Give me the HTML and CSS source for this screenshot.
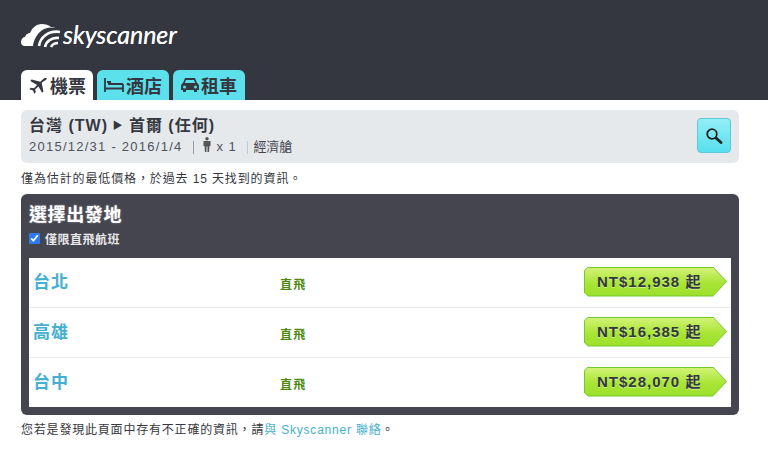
FILE: index.html
```html
<!DOCTYPE html>
<html lang="zh-Hant">
<head>
<meta charset="utf-8">
<title>Skyscanner</title>
<link rel="stylesheet" href="styles.css">
</head>
<body>
<header class="top">
  <div class="logo">
    <svg class="cloud" width="41" height="26" viewBox="0 0 41 26">
      <path fill="#fff" d="M0 20c0-3 2-5 4-5 1-3 3-4 5-4 2-5 6-9 12-9 3 0 7 1 9 3 1 0 3 0 4 1-8-2-15 2-19 9-2 3-3 7-3 9H4c-3 0-4-2-4-4z"/>
      <path fill="none" stroke="#fff" stroke-width="2.600" d="M18 24c1-8 9-16 21-14"/>
      <path fill="none" stroke="#fff" stroke-width="2.600" d="M24 25c1-5 6-10 14-9"/>
      <path fill="none" stroke="#fff" stroke-width="2.600" d="M30 25c1-2 3-4 7-4"/>
    </svg>
    <span class="brand">skyscanner</span>
  </div>
  <nav class="tabs">
    <a class="tab tab-on">
      <svg width="20" height="17" viewBox="0 0 22 18"><path fill="#353740" d="M20.500 1c-1-.8-2.800-.2-4 1L13.500 5 4 2.500 2.500 4l7.500 4.500L6.500 12 3 11.500 1.500 13l4 1.500 1.500 3.500 1.500-1.500-.5-3.500L11.500 10l4 7 1.500-1.500L15 6l4.500-3c1-1 1.500-1.500 1-2z"/></svg>
      <span>機票</span>
    </a>
    <a class="tab">
      <svg width="20" height="14" viewBox="0 0 20 14"><path fill="none" stroke="#353740" stroke-width="1.800" d="M1 0v14M1 10.500h18M19 6v8M4 6h15"/><path fill="#353740" d="M3 3h4v2H3z"/></svg>
      <span>酒店</span>
    </a>
    <a class="tab">
      <svg width="18" height="16" viewBox="0 0 18 16"><path fill="#353740" d="M4 1h10l2 5c1 .5 2 1.500 2 3v4h-2v2h-3v-2H5v2H2v-2H0V9c0-1.500 1-2.500 2-3zM5 3 3.800 6h10.400L13 3z"/><circle cx="3.500" cy="10" r="1.500" fill="#5ce0ec"/><circle cx="14.500" cy="10" r="1.500" fill="#5ce0ec"/></svg>
      <span>租車</span>
    </a>
  </nav>
</header>
<main class="content">
  <section class="summary">
    <div class="summary-text">
      <div class="route">台灣 (TW) <span class="arrow">▶</span> 首爾 (任何)</div>
      <div class="meta">
        <span class="dates">2015/12/31 - 2016/1/4</span>
        <span class="sep"></span>
        <svg class="person" width="10" height="15" viewBox="0 0 9 15"><circle cx="4.500" cy="1.800" r="1.700" fill="#555"/><path fill="#555" d="M1 4h7v5H7l-.5 6H5V9.500H4V15H2.500L2 9H1z"/></svg>
        <span class="count">x 1</span>
        <span class="sep sep-light"></span>
        <span class="cabin">經濟艙</span>
      </div>
    </div>
    <button class="search" aria-label="搜尋">
      <svg width="18" height="18" viewBox="0 0 18 18"><circle cx="7" cy="7" r="4.800" fill="none" stroke="#222" stroke-width="1.800"/><path stroke="#222" stroke-width="2.800" stroke-linecap="round" d="M11 11l5 4.500"/></svg>
    </button>
  </section>
  <p class="note">僅為估計的最低價格，於過去 15 天找到的資訊。</p>
  <section class="panel">
    <h2>選擇出發地</h2>
    <label class="direct"><input type="checkbox" checked>僅限直飛航班</label>
    <div class="rows">
      <div class="row"><a class="city">台北</a><span class="stop">直飛</span><a class="price"><span>NT$12,938 起</span></a></div>
      <div class="row"><a class="city">高雄</a><span class="stop">直飛</span><a class="price"><span>NT$16,385 起</span></a></div>
      <div class="row"><a class="city">台中</a><span class="stop">直飛</span><a class="price"><span>NT$28,070 起</span></a></div>
    </div>
  </section>
  <p class="foot">您若是發現此頁面中存有不正確的資訊，請<a>與 Skyscanner 聯絡</a>。</p>
</main>
</body>
</html>
```
FILE: styles.css
```css
* { box-sizing: border-box; }
html, body { margin: 0; padding: 0; }
body {
  background: #fff;
  color: #353740;
  font-family: "Liberation Sans", "Noto Sans CJK TC", sans-serif;
  font-size: 12px;
  height: 465px;
  overflow: hidden;
}
.top {
  background: #353740;
  height: 100px;
  padding: 21px 21px 0;
  display: flex;
  flex-direction: column;
}
.logo { display: flex; align-items: center; gap: 1px; height: 27px; }
.brand {
  color: #fff;
  font-family: "Lato", sans-serif;
  font-style: italic;
  font-weight: 400;
  font-size: 25px;
  line-height: 27px;
  letter-spacing: -0.1px;
  text-shadow: 0 0 .6px #fff;
}
.tabs { display: flex; gap: 4px; margin-top: 22px; }
.tab {
  height: 30px;
  width: 72px;
  background: #5ce0ec;
  border-radius: 6px 6px 0 0;
  display: flex;
  align-items: center;
  justify-content: center;
  gap: 2px;
  font-size: 18px;
  font-weight: 700;
  color: #353740;
}
.tab-on { background: #fff; }
.content { padding: 10px 29px 0 21px; }
.summary {
  height: 53px;
  width: 718px;
  background: #e6e9ec;
  border-radius: 6px;
  padding: 6px 8px 0 8px;
  display: flex;
  justify-content: space-between;
}
.route { font-size: 16px; font-weight: 700; line-height: 20px; color: #353740; letter-spacing: 1px; }
.arrow { font-size: 10px; margin-left: -1px; position: relative; top: -2px; }
.meta {
  display: flex;
  align-items: center;
  gap: 5px;
  font-size: 13px;
  line-height: 18px;
  color: #50525c;
}
.dates { letter-spacing: 1.25px; }
.count { letter-spacing: .9px; margin-left: -1px; }
.cabin { color: #44454f; margin-left: -2px; letter-spacing: -.2px; }
.sep { width: 1px; height: 13px; background: #9a9ca4; margin-left: 6px; margin-right: 3px; }
.sep-light { background: #c5c7cc; margin-left: 5px; margin-right: 3px; }
.person { margin-top: -5px; }
.search {
  width: 34px;
  height: 35px;
  margin-top: 2px;
  padding: 0;
  border: 1px solid #5cc8d8;
  border-radius: 4px;
  background: linear-gradient(#93eef6, #58e0ee);
  display: flex;
  align-items: center;
  justify-content: center;
}
.note { margin: 7px 0 8px; padding-top: 1px; height: 16px; font-size: 12px; line-height: 16px; color: #353740; letter-spacing: .88px; }
.panel {
  width: 718px;
  height: 221px;
  background: #44454f;
  border-radius: 6px;
  padding: 9px 8px 8px;
  color: #fff;
  display: flex;
  flex-direction: column;
}
.panel h2 { margin: 0; font-size: 18px; line-height: 24px; font-weight: 700; letter-spacing: .6px; text-shadow: 0 0 2px rgba(255,255,255,.5); }
.direct {
  display: flex;
  align-items: center;
  gap: 5px;
  font-size: 12px;
  font-weight: 700;
  line-height: 16px;
  margin-top: 5px;
  letter-spacing: .5px;
  color: #e8e8ea;
}
.direct input { margin: -3px 0 0; width: 11px; height: 11px; accent-color: #2a7cf0; }
.rows { margin-top: 10px; background: #fff; flex: 1; display: flex; flex-direction: column; }
.row {
  flex: 1;
  display: grid;
  grid-template-columns: 251px 1fr auto;
  align-items: center;
  padding: 0 4px 0 4px;
  border-bottom: 1px solid #e8e9eb;
}
.row:last-child { border-bottom: 0; }
.city { font-size: 17px; font-weight: 700; color: #45afd0; letter-spacing: 1px; position: relative; top: -2px; }
.stop { font-size: 12px; font-weight: 700; color: #4f8a10; padding-top: 2px; margin-left: -4px; letter-spacing: 1.2px; }
.price {
  position: relative;
  top: -1px;
  display: block;
  width: 143px;
  height: 30px;
  background: #74c92c;
  clip-path: polygon(0 4px, 4px 0, 129px 0, 143px 15px, 129px 30px, 4px 30px, 0 26px);
}
.price::before {
  content: "";
  position: absolute;
  inset: 1px;
  background: linear-gradient(#d2f276, #a8e535 55%, #9ce02a);
  clip-path: polygon(0 3px, 3px 0, 128px 0, 141px 14px, 128px 28px, 3px 28px, 0 25px);
}
.price span {
  position: relative;
  display: block;
  font-size: 15px;
  font-weight: 700;
  line-height: 30px;
  letter-spacing: 1px;
  color: #353740;
  padding-left: 13px;
  white-space: nowrap;
  text-shadow: 0 1px 0 rgba(255,255,255,.45);
}
.foot { margin: 6px 0 0; padding-top: 1px; font-size: 12px; line-height: 16px; color: #353740; letter-spacing: .8px; }
.foot a { color: #45afd0; }
```
